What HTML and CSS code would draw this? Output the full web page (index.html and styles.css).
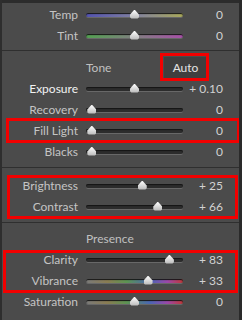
FILE: index.html
```html
<!DOCTYPE html>
<html>
<head>
    <title>Basic</title>
    <link rel="stylesheet" href="styles.css">
</head>
<body>
    <div class="panel">
        <div class="topbar"></div>

        <section class="group g-wb">
            <div class="row"><span class="label">Temp</span><div class="track temp"><i class="thumb" style="left: 50%"></i></div><span class="val">0</span></div>
            <div class="row"><span class="label">Tint</span><div class="track tint"><i class="thumb" style="left: 50%"></i></div><span class="val">0</span></div>
        </section>

        <section class="group g-tone">
            <div class="head"><span>Tone</span><button class="auto">Auto</button></div>
            <div class="row"><span class="label active">Exposure</span><div class="track"><i class="thumb" style="left: 50%"></i></div><span class="val">+ 0.10</span></div>
            <div class="row"><span class="label">Recovery</span><div class="track"><i class="thumb" style="left: 6%"></i></div><span class="val">0</span></div>
            <div class="row"><span class="label">Fill Light</span><div class="track"><i class="thumb" style="left: 6%"></i></div><span class="val">0</span></div>
            <div class="row"><span class="label">Blacks</span><div class="track"><i class="thumb" style="left: 6%"></i></div><span class="val">0</span></div>
        </section>

        <section class="group g-bc">
            <div class="row"><span class="label">Brightness</span><div class="track"><i class="thumb" style="left: 58%"></i></div><span class="val">+ 25</span></div>
            <div class="row"><span class="label">Contrast</span><div class="track"><i class="thumb" style="left: 74%"></i></div><span class="val">+ 66</span></div>
        </section>

        <section class="group g-presence">
            <div class="head"><span>Presence</span></div>
            <div class="row"><span class="label">Clarity</span><div class="track"><i class="thumb" style="left: 86%"></i></div><span class="val">+ 83</span></div>
            <div class="row"><span class="label">Vibrance</span><div class="track rainbow"><i class="thumb" style="left: 64%"></i></div><span class="val">+ 33</span></div>
            <div class="row"><span class="label">Saturation</span><div class="track rainbow"><i class="thumb" style="left: 50%"></i></div><span class="val">0</span></div>
        </section>

        <!-- red annotation boxes -->
        <div class="mark m-auto"></div>
        <div class="mark m-fill"></div>
        <div class="mark m-bc"></div>
        <div class="mark m-presence"></div>
    </div>
</body>
</html>
```

FILE: styles.css
```css
* { box-sizing: border-box; }
body { margin: 0; background: #4b4b4b; font-family: Lato, "Open Sans", sans-serif; font-size: 12px; color: #c4c4c4; }

.panel { position: relative; width: 242px; height: 320px; overflow: hidden; background: #4b4b4b;
         border-left: 2px solid #2e2e2e; border-right: 3px solid #2a2a2a; }
.topbar { height: 3px; background: #2c2c2c; margin-left: -2px; margin-right: -3px; }

.group { padding: 0; }
.group + .group { border-top: 1px solid #2f2f2f; }
.g-wb { padding-top: 1px; padding-bottom: 4px; }
.g-tone { padding-top: 6px; padding-bottom: 5px; }
.g-bc { padding-top: 7px; padding-bottom: 5px; }
.g-presence { padding-top: 5px; }

.row { display: grid; grid-template-columns: 84px 97px 40px; height: 21px; align-items: center; }
.label { text-align: right; padding-right: 8px; white-space: nowrap; }
.label.active { color: #f2f2f2; }
.val { text-align: right; color: #d2d2d2; white-space: nowrap; }

.head { display: flex; align-items: center; height: 21px; padding-left: 84px; color: #c0c0c0; }
.auto { margin-left: auto; margin-right: 32px; height: 22px; width: 43px; padding: 0;
        background: #3f3f3f; border: none; color: #e4e4e4; font: inherit; }

.track { position: relative; height: 4px; border-radius: 2px; background: #2c2c2c;
         box-shadow: inset 0 1px 1px #151515, 0 1px 0 #686868; }
.track.temp { background: linear-gradient(to right, #5252b0, #8080a0 50%, #a8a85a); }
.track.tint { background: linear-gradient(to right, #52a050, #808080 50%, #a850a8); }
.track.rainbow { background: linear-gradient(to right, #7a7a7a, #8a7c52 22%, #5c9452 42%, #4a66b4 66%, #9a48a8 84%, #c03838); }

.thumb { position: absolute; top: -3px; width: 9px; height: 9px; margin-left: -4.5px;
         background: linear-gradient(#ffffff, #b8b8b8);
         clip-path: polygon(50% 0, 100% 55%, 100% 85%, 85% 100%, 15% 100%, 0 85%, 0 55%); }

.mark { position: absolute; border: 3px solid #f20000; }
.m-auto { left: 158px; top: 53px; width: 49px; height: 28px; }
.m-fill { left: 4px; top: 118px; width: 234px; height: 25px; }
.m-bc { left: 5px; top: 175px; width: 231px; height: 44px; }
.m-presence { left: 1px; top: 250px; width: 235px; height: 43px; }
```
